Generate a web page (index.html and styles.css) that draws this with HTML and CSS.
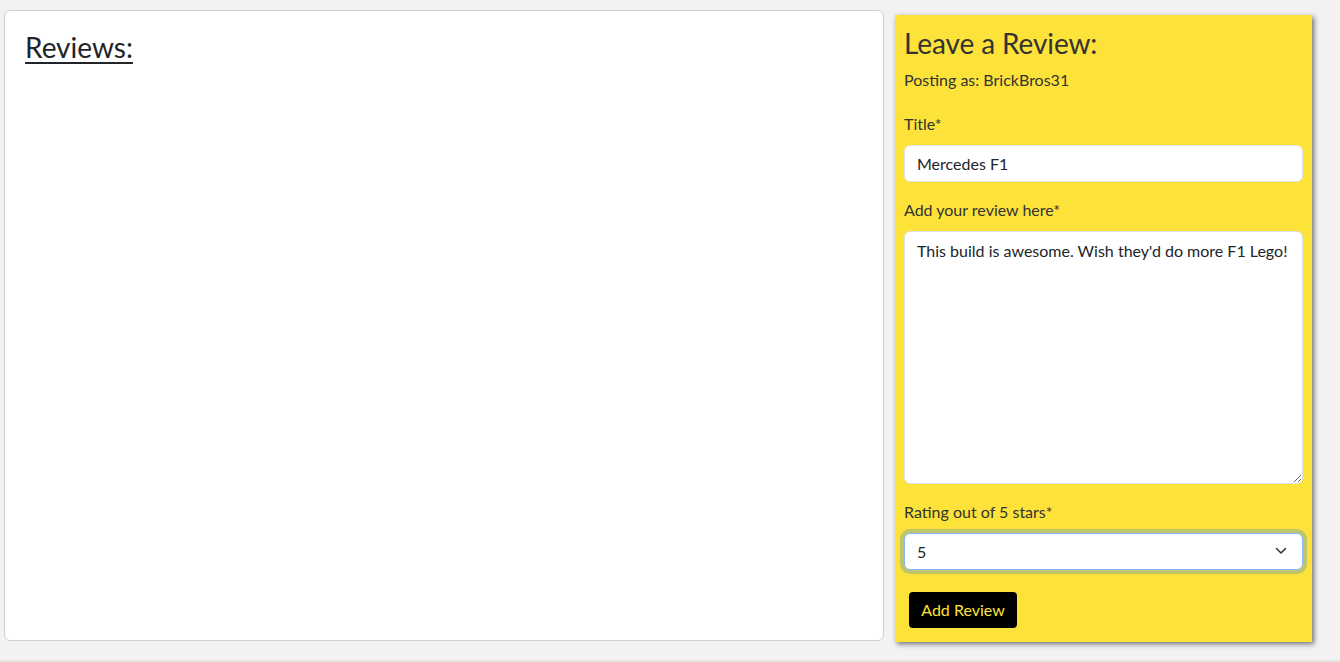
FILE: index.html
```html
<!DOCTYPE html>
<html lang="en">
<head>
<meta charset="utf-8">
<title>Reviews</title>
<link rel="stylesheet" href="styles.css">
</head>
<body>
<main class="page">
  <section class="reviews-card">
    <h2 class="reviews-title">Reviews:</h2>
  </section>
  <aside class="review-form">
    <h3 class="form-title">Leave a Review:</h3>
    <p class="posting-as">Posting as: BrickBros31</p>
    <form class="form">
      <label class="field-label" for="title">Title*</label>
      <input class="field-input" id="title" type="text" value="Mercedes F1">
      <label class="field-label" for="body">Add your review here*</label>
      <textarea class="field-textarea" id="body">This build is awesome. Wish they'd do more F1 Lego!</textarea>
      <label class="field-label" for="rating">Rating out of 5 stars*</label>
      <div class="select-wrap">
        <div class="field-select" id="rating">
          <span>5</span>
          <svg class="chevron" width="12" height="8" viewBox="0 0 12 8"><path d="M1.5 1.5 L6 6 L10.5 1.5" fill="none" stroke="#343a40" stroke-width="1.6" stroke-linecap="round" stroke-linejoin="round"/></svg>
        </div>
      </div>
      <button class="submit-btn" type="button">Add Review</button>
    </form>
  </aside>
</main>
<footer class="footer"></footer>
</body>
</html>
```

FILE: styles.css
```css
* { box-sizing: border-box; }
html, body { margin: 0; padding: 0; }
body {
  background: #f2f2f2;
  font-family: Lato, "Open Sans", "Liberation Sans", sans-serif;
  color: #333;
  overflow: hidden;
}
.page {
  height: 660px;
  display: flex;
  align-items: flex-start;
  padding: 10px 0 0 4px;
  gap: 11px;
}
.reviews-card {
  width: 880px;
  height: 631px;
  background: #fff;
  border: 1px solid #d0d0d0;
  border-radius: 6px;
  padding: 20px 20px;
}
.reviews-title {
  margin: 0;
  font-size: 28px;
  font-weight: 400;
  line-height: 1.2;
  color: #212529;
  text-decoration: underline;
  text-underline-offset: 4px;
  text-decoration-thickness: 2px;
}
.review-form {
  width: 417px;
  height: 627px;
  margin-top: 5px;
  background: #fde23a;
  box-shadow: 2px 2px 5px rgba(0,0,0,0.55);
  padding: 12px 9px;
}
.form-title {
  margin: 0;
  font-size: 28px;
  font-weight: 400;
  line-height: 1.2;
  color: #333;
  letter-spacing: -0.1px;
}
.posting-as {
  margin: 7px 0 4px;
  font-size: 16px;
  line-height: 24px;
}
.form {
  display: flex;
  flex-direction: column;
  align-items: stretch;
}
.field-label {
  font-size: 16px;
  line-height: 24px;
  margin: 16px 0 9px;
}
.field-input, .field-textarea {
  font-family: inherit;
  font-size: 16px;
  color: #212529;
  background: #fff;
  border: 1px solid #dee2e6;
  border-radius: 6px;
  padding: 8px 12px;
  width: 100%;
}
.field-input { height: 37px; }
.field-textarea {
  height: 253px;
  resize: vertical;
  line-height: 20px;
  padding-top: 9px;
}
.select-wrap { width: 100%; }
.field-select {
  height: 37px;
  background: #fff;
  border: 1px solid #86b7fe;
  border-radius: 6px;
  box-shadow: 0 0 0 4px rgba(13,110,253,0.25);
  display: flex;
  align-items: center;
  justify-content: space-between;
  padding: 0 15px 0 12px;
  font-size: 16px;
  color: #212529;
}
.chevron { display: block; }
.submit-btn {
  align-self: flex-start;
  margin: 22px 0 0 5px;
  width: 108px;
  height: 36px;
  background: #000;
  color: #fde23a;
  border: none;
  border-radius: 4px;
  font-family: inherit;
  font-size: 16px;
  padding: 0;
}
.footer {
  height: 2px;
  background: #e4e4e4;
}
```
